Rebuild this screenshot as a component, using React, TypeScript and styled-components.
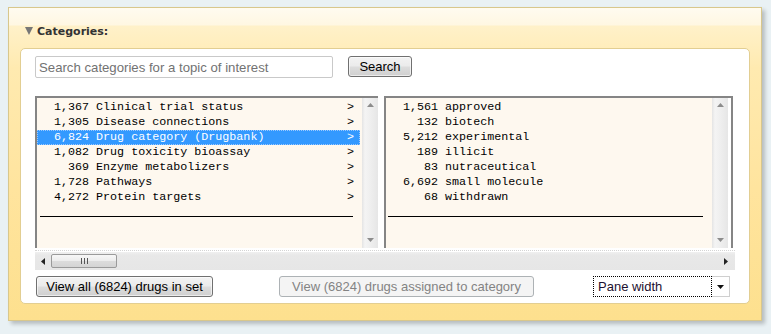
import React from "react";
import styled, { createGlobalStyle } from "styled-components";

const GlobalStyle = createGlobalStyle`
  html, body { margin: 0; padding: 0; background: #e9f1f4; }
  body { font-family: "Liberation Sans", Arial, sans-serif; }
  * { box-sizing: border-box; }
`;

const Page = styled.div`
  width: 771px;
  height: 334px;
  padding: 7px 0 0 8px;
`;

const Outer = styled.section`
  width: 754px;
  height: 314px;
  border: 1px solid #d8c78c;
  background: linear-gradient(
    to bottom,
    #fffbf0 0px,
    #fff7e2 17px,
    #fff1c9 18px,
    #ffeab0 60px,
    #ffe49e 180px,
    #fde08e 100%
  );
  box-shadow: 3px 3px 4px rgba(0, 0, 0, 0.22);
  display: flex;
  flex-direction: column;
  padding: 0 11px 16px 11px;
`;

const Header = styled.div`
  height: 40px;
  padding: 17px 0 0 5px;
  display: flex;
  align-items: flex-start;
  gap: 4px;
`;

const Caret = styled.svg`
  width: 8px;
  height: 8px;
  margin-top: 2px;
  flex: none;
`;

const Title = styled.span`
  font-family: "DejaVu Sans", Verdana, sans-serif;
  font-weight: bold;
  font-size: 11px;
  line-height: 13px;
  color: #333;
`;

const Card = styled.div`
  width: 730px;
  height: 256px;
  background: #fff;
  border: 1px solid #e2ce92;
  border-radius: 5px;
  padding: 7px 0 0 14px;
  display: flex;
  flex-direction: column;
`;

const SearchRow = styled.div`
  display: flex;
  gap: 15px;
  align-items: flex-start;
`;

const SearchInput = styled.input`
  width: 298px;
  height: 22px;
  border: 1px solid #c9c9c9;
  border-radius: 2px;
  padding: 0 0 0 3px;
  font-family: "Liberation Sans", Arial, sans-serif;
  font-size: 13.2px;
  color: #222;
  outline: none;
  &::placeholder { color: #727272; }
`;

const Button = styled.button<{ $w: number; $ml?: number }>`
  width: ${(p) => p.$w}px;
  height: 21px;
  margin-left: ${(p) => p.$ml ?? 0}px;
  padding: 0;
  border: 1px solid #707070;
  border-radius: 3px;
  background: linear-gradient(to bottom, #f3f3f3 0%, #ebebeb 48%, #dddddd 52%, #cfcfcf 100%);
  font-family: "Liberation Sans", Arial, sans-serif;
  font-size: 13px;
  color: #000;
  line-height: 19px;
  box-shadow: inset 0 0 0 1px rgba(255, 255, 255, 0.6);
  &:disabled {
    border-color: #adb2b5;
    background: #f4f4f4;
    color: #838383;
    box-shadow: none;
  }
`;

const Frames = styled.div`
  margin-top: 18px;
  width: 700px;
  display: flex;
  flex-direction: column;
`;

const PanesRow = styled.div`
  height: 155px;
  display: flex;
  padding-bottom: 2px;
  border-bottom: 1px dotted #d4d4d4;
`;

const Pane = styled.div<{ $w: number; $ml?: number; $right?: boolean }>`
  width: ${(p) => p.$w}px;
  margin-left: ${(p) => p.$ml ?? 0}px;
  border-left: 2px solid #858585;
  border-top: 2px solid #858585;
  border-right: ${(p) => (p.$right ? "2px solid #858585" : "none")};
  padding-right: ${(p) => (p.$right ? 3 : 0)}px;
  display: flex;
  background: #fff;
`;

const List = styled.div`
  flex: 1;
  background: #fef8ef;
  padding: 2px 2px 0 0;
  font-family: "Liberation Mono", "Courier New", monospace;
  font-size: 11.7px;
  line-height: 15px;
  color: #000;
`;

const Row = styled.div<{ $selected?: boolean }>`
  height: 15px;
  display: flex;
  padding: 0 6px 0 17px;
  white-space: pre;
  background: ${(p) => (p.$selected ? "#3399ff" : "transparent")};
  color: ${(p) => (p.$selected ? "#fff" : "#000")};
  outline: ${(p) => (p.$selected ? "1px dotted #9cc9ff" : "none")};
  outline-offset: -1px;
`;

const Chevron = styled.span`
  margin-left: auto;
`;

const Rule = styled.div<{ $ml: number }>`
  margin: 11px 7px 0 ${(p) => p.$ml}px;
  border-top: 1px solid #000;
`;

const VScroll = styled.div`
  width: 16px;
  flex: none;
  background: linear-gradient(to right, #e4e4e4 0, #f4f4f4 3px, #eeeeee 9px, #e6e6e6 16px);
  display: flex;
  flex-direction: column;
  justify-content: space-between;
  align-items: center;
  padding: 5px 0 6px;
`;

const Arrow = styled.svg`
  display: block;
  flex: none;
`;

const HScroll = styled.div`
  margin-top: 1px;
  height: 18px;
  background: linear-gradient(to bottom, #f0f0f0 0, #e8e8e8 3px, #e6e6e6 100%);
  display: flex;
  align-items: center;
  padding: 0 7px 0 6px;
`;

const Thumb = styled.div`
  width: 66px;
  height: 14px;
  margin-left: 6px;
  border: 1px solid #9a9a9a;
  border-radius: 2px;
  background: linear-gradient(to bottom, #f7f7f7 0%, #ececec 50%, #dcdcdc 51%, #d4d4d4 100%);
  display: flex;
  align-items: center;
  justify-content: center;
  gap: 2px;
`;

const Grip = styled.span`
  width: 1px;
  height: 6px;
  background: #555;
`;

const Spacer = styled.div`
  flex: 1;
`;

const ButtonRow = styled.div`
  margin-top: 6px;
  display: flex;
  align-items: flex-start;
  padding-left: 1px;
`;

const SelectBox = styled.div`
  margin-left: 59px;
  width: 137px;
  height: 21px;
  display: flex;
`;

const SelectValue = styled.div`
  width: 119px;
  height: 21px;
  border: 1px dotted #000;
  padding-left: 4px;
  font-size: 13px;
  line-height: 19px;
  color: #1c1030;
`;

const SelectArrow = styled.div`
  flex: 1;
  border: 1px solid #cfcfcf;
  border-left: none;
  display: flex;
  align-items: center;
  justify-content: center;
`;

const left = [
  [1367, "Clinical trial status"],
  [1305, "Disease connections"],
  [6824, "Drug category (Drugbank)"],
  [1082, "Drug toxicity bioassay"],
  [369, "Enzyme metabolizers"],
  [1728, "Pathways"],
  [4272, "Protein targets"],
] as const;

const right = [
  [1561, "approved"],
  [132, "biotech"],
  [5212, "experimental"],
  [189, "illicit"],
  [83, "nutraceutical"],
  [6692, "small molecule"],
  [68, "withdrawn"],
] as const;

const fmt = (n: number) => n.toLocaleString("en-US").padStart(5, " ");

const ScrollV = () => (
  <VScroll>
    <Arrow width="7" height="4" viewBox="0 0 7 4">
      <polygon points="0,4 7,4 3.5,0" fill="#8c8c8c" />
    </Arrow>
    <Arrow width="7" height="4" viewBox="0 0 7 4">
      <polygon points="0,0 7,0 3.5,4" fill="#8c8c8c" />
    </Arrow>
  </VScroll>
);

export default function App() {
  return (
    <Page>
      <GlobalStyle />
      <Outer>
        <Header>
          <Caret viewBox="0 0 8 8">
            <polygon points="0,0 8,0 4,8" fill="#777" />
          </Caret>
          <Title>Categories:</Title>
        </Header>
        <Card>
          <SearchRow>
            <SearchInput placeholder="Search categories for a topic of interest" />
            <Button $w={64}>Search</Button>
          </SearchRow>
          <Frames>
            <PanesRow>
              <Pane $w={343}>
                <List>
                  {left.map(([n, label]) => (
                    <Row key={label} $selected={n === 6824}>
                      <span>{`${fmt(n)} ${label}`}</span>
                      <Chevron>&gt;</Chevron>
                    </Row>
                  ))}
                  <Rule $ml={3} />
                </List>
                <ScrollV />
              </Pane>
              <Pane $w={349} $ml={6} $right>
                <List>
                  {right.map(([n, label]) => (
                    <Row key={label}>
                      <span>{`${fmt(n)} ${label}`}</span>
                    </Row>
                  ))}
                  <Rule $ml={2} />
                </List>
                <ScrollV />
              </Pane>
            </PanesRow>
            <HScroll>
              <Arrow width="4" height="7" viewBox="0 0 4 7">
                <polygon points="4,0 4,7 0,3.5" fill="#222" />
              </Arrow>
              <Thumb>
                <Grip />
                <Grip />
                <Grip />
              </Thumb>
              <Spacer />
              <Arrow width="4" height="7" viewBox="0 0 4 7">
                <polygon points="0,0 0,7 4,3.5" fill="#222" />
              </Arrow>
            </HScroll>
          </Frames>
          <ButtonRow>
            <Button $w={177}>View all (6824) drugs in set</Button>
            <Button $w={255} $ml={66} disabled>
              View (6824) drugs assigned to category
            </Button>
            <SelectBox>
              <SelectValue>Pane width</SelectValue>
              <SelectArrow>
                <Arrow width="7" height="4" viewBox="0 0 7 4">
                  <polygon points="0,0 7,0 3.5,4" fill="#111" />
                </Arrow>
              </SelectArrow>
            </SelectBox>
          </ButtonRow>
        </Card>
      </Outer>
    </Page>
  );
}
